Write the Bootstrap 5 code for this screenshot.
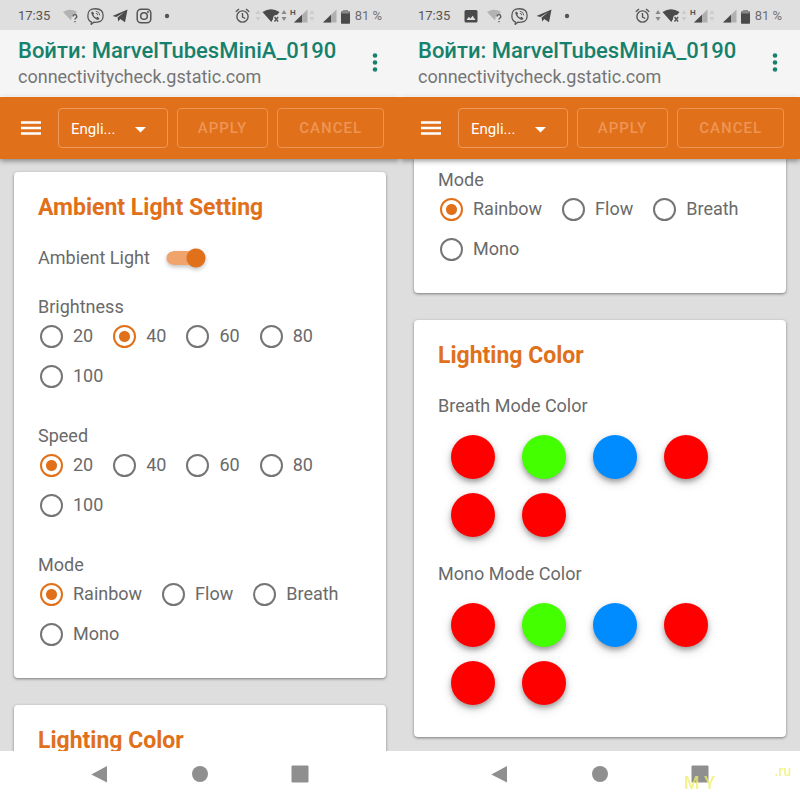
<!DOCTYPE html>
<html lang="en">
<head>
<meta charset="utf-8">
<meta name="viewport" content="width=device-width, initial-scale=1">
<title>Ambient Light Setting</title>
<link href="https://cdn.jsdelivr.net/npm/bootstrap@5.3.0/dist/css/bootstrap.min.css" rel="stylesheet">
<style>
  :root { --accent: #e0701a; --ink: #6a6a6a; }
  body { font-family: Roboto, "Liberation Sans", sans-serif; font-size: 18px; line-height: 20px; color: var(--ink); background: #dedede; }
  .status-bar { height: 30px; padding: 2px 18px 0; background: #dfdfdf; color: #555; font-size: 13px; }
  .status-bar svg { display: block; }
  .status-left { gap: 8px; }
  .clock { margin-right: 5px; }
  .charge { color: #707070; }
  .page-head { height: 67px; padding: 0 18px; background: #f5f5f5; border-bottom: 1px solid #fff; }
  .page-title { font-size: 22px; line-height: 28px; font-weight: 500; color: #16816c; }
  .page-host { font-size: 18px; line-height: 24px; color: #757575; }
  .more-btn { width: 14px; }
  .app-bar { height: 62px; padding: 0 16px 0 20px; gap: 9px; background: var(--accent); box-shadow: 0 2px 5px rgba(0,0,0,.4); z-index: 2; }
  .menu-btn { width: 22px; margin-right: 7px; }
  .bar-control { height: 40px; border: 1px solid #eb9a5c; border-radius: 4px; background-color: transparent; }
  .lang-box { width: 110px; }
  .lang-select { padding: 2px 12px 0; font-size: 15px; line-height: 20px; color: #fff; appearance: none; cursor: pointer; }
  .lang-select option { color: #333; }
  .lang-caret { right: 22px; top: 19px; pointer-events: none; }
  .bar-btn { font-size: 15px; line-height: 20px; font-weight: 500; letter-spacing: 1px; color: #f09c60; padding: 0; }
  .bar-btn:disabled { color: #ee9555; opacity: 1; }
  .apply { width: 92px; }
  .cancel { width: 107px; }
  .scroll-area { padding: 13px 14px 0; min-height: 0; }
  .scroll-area.scrolled { padding-top: 0; }
  .panel { padding: 22px 24px 32px; margin-bottom: 27px; background: #fff; border-radius: 4px; box-shadow: 0 1px 3px rgba(0,0,0,.45); }
  .panel.cut { padding-top: 11px; border-radius: 0 0 4px 4px; }
  .panel-title { font-size: 23px; line-height: 28px; font-weight: 700; color: var(--accent); margin: 0 0 26px; }
  .switch-row { gap: 16px; margin-bottom: 29px; }
  .switch { width: 40px; height: 20px; appearance: none; cursor: pointer; border-radius: 10px;
    background: radial-gradient(circle at 30px 10px, var(--accent) 9px, transparent 10px), linear-gradient(#f0a46c, #f0a46c) 7px 3px / 24px 14px no-repeat, radial-gradient(circle at 7px 10px, #f0a46c 6px, transparent 7px);
    filter: drop-shadow(0 2px 2px rgba(0,0,0,.25)); }
  fieldset + fieldset { margin-top: 38px; }
  .group-label { font-size: 18px; line-height: 20px; margin: 0; float: none; }
  .choices { padding: 7px 0 0 2px; gap: 16px 20px; }
  .choice { gap: 10px; height: 24px; cursor: pointer; }
  .choice .form-check-input { width: 23px; height: 23px; margin: 0; border: 2px solid #757575; background-color: transparent; box-shadow: none; }
  .choice .form-check-input:checked { border-color: var(--accent); background-image: radial-gradient(circle, var(--accent) 5px, transparent 6px); }
  .swatches { padding: 19px 0 0 13px; gap: 14px 27px; }
  .swatch { width: 44px; height: 44px; border: 0; border-radius: 50%; box-shadow: 0 3px 5px rgba(0,0,0,.3), 0 4px 12px rgba(0,0,0,.14); }
  .red { background: #f00; } .green { background: #4f0; } .blue { background: #008cff; }
  .swatch-group + .swatch-group { margin-top: 27px; }
  .nav-keys { height: 48px; padding-bottom: 2px; background: #fff; z-index: 2; }
  .nav-keys svg { display: block; }
  .stamp { color: #eef06a; font-weight: 500; pointer-events: none; z-index: 3; opacity: .75; }
  .stamp-my { right: 85px; bottom: 6px; font-size: 18px; }
  .stamp-ru { right: 9px; bottom: 18px; font-size: 14px; }
</style>
<script src="https://cdn.jsdelivr.net/npm/bootstrap@5.3.0/dist/js/bootstrap.bundle.min.js"></script>
</head>
<body>
<svg class="d-none" aria-hidden="true">
  <symbol id="i-wifi-q" viewBox="0 0 16 16"><path d="M0 4Q7-.5 14 4L12.500 6.500Q8.500 6.500 8.500 10L8 12.500Z" fill="#b3b3b3"/><path d="M10 8.600q0-1.900 1.900-1.900 1.900 0 1.900 1.700 0 1-.9 1.600-.9.600-.9 1.500M12 13v1.300" fill="none" stroke="#555" stroke-width="1.300"/></symbol>
  <symbol id="i-viber" viewBox="0 0 16 16"><path d="M8 .7C3 .7 .8 2.600.8 7.200c0 3.200 1 5 3.200 5.800v2.400l2.400-2C12.500 13.900 15.200 12 15.200 7.200 15.200 2.600 13 .7 8 .7Z" fill="none" stroke="#555" stroke-width="1.200"/><path d="M5.200 3.300l1.500 1.900-.8 1.200q.9 2 2.700 2.700l1.100-.9 2 1.500q-.4 1.700-1.700 1.600Q5 9.500 4 4.700q0-1 1.200-1.400Z" fill="#555"/><path d="M8.200 3q3.700.2 3.800 4M8.400 4.900q1.600.2 1.700 1.900" fill="none" stroke="#555" stroke-width=".8"/></symbol>
  <symbol id="i-telegram" viewBox="0 0 16 16"><path d="M.5 8 15.500 1.500 13 14.300 8.300 11 6.200 13.500 5.600 9.500 12.500 4 4.400 8.900Z" fill="#4a4a4a"/></symbol>
  <symbol id="i-insta" viewBox="0 0 16 16"><g fill="none" stroke="#555" stroke-width="1.500"><rect x="1.200" y="1.200" width="13.600" height="13.600" rx="3.800"/><circle cx="8" cy="8" r="3.300"/></g><circle cx="12" cy="4.100" r="1" fill="#555"/></symbol>
  <symbol id="i-photo" viewBox="0 0 16 16"><path fill="#4a4a4a" fill-rule="evenodd" d="M3 2h10q1.500 0 1.500 1.500v9.500q0 1.500-1.500 1.500H3q-1.500 0-1.500-1.500V3.500Q1.500 2 3 2ZM3.500 12h9L9.700 7.700 7.400 10.500 5.800 8.800Z"/></symbol>
  <symbol id="i-tri" viewBox="0 0 6 12"><path d="M3 0 5.500 4h-5ZM3 11 5.500 7h-5Z"/></symbol>
  <symbol id="i-signal" viewBox="0 0 14 14"><path d="M13.500.5v13H0Z" fill="#b0b0b0"/><path d="M8 5.700v7.800H0Z" fill="#4a4a4a"/></symbol>
  <symbol id="i-system" viewBox="0 0 116 20">
    <g fill="none" stroke="#555" stroke-width="1.400"><circle cx="7.500" cy="10.500" r="5.600"/><path d="M7.500 7v4l2.800 1.500M.8 5.800 4 3M14.200 5.800 11 3"/></g>
    <path d="M27.500 6Q36 .5 44.500 6L42 9Q38 8.500 38 13L36.300 16Z" fill="#4a4a4a"/><path d="M39.500 11l3.600 4.500M43.100 11l-3.600 4.500" stroke="#555" stroke-width="1.400"/>
    <text x="55" y="9" font-size="8" font-weight="700" fill="#555" font-family="Roboto, sans-serif">H</text>
    <use href="#i-signal" x="59" y="3" width="14" height="14"/><use href="#i-signal" x="88" y="3" width="14" height="14"/>
    <use href="#i-tri" x="74" y="4" width="6" height="12" fill="#ccc"/>
    <path d="M108.500 4h4v1.500h2q.5 0 .5.500v11q0 .8-.8.800h-7.400q-.8 0-.8-.8V6q0-.5.5-.5h2Z" fill="#4a4a4a"/><path d="M108.500 4h4v1.500h2v2h-8v-2h2Z" fill="#888"/>
  </symbol>
  <symbol id="i-more" viewBox="0 0 14 24"><g fill="#16816c"><circle cx="7" cy="4.500" r="2.300"/><circle cx="7" cy="11.500" r="2.300"/><circle cx="7" cy="18.500" r="2.300"/></g></symbol>
  <symbol id="i-menu" viewBox="0 0 22 16"><path d="M1 2.500h20M1 8h20M1 13.500h20" stroke="#fff" stroke-width="2.300"/></symbol>
  <symbol id="i-back" viewBox="0 0 18 18"><path d="M16 1v16.500L.3 9.500Z" fill="#8f8f8f"/></symbol>
  <symbol id="i-home" viewBox="0 0 18 18"><circle cx="9" cy="9" r="8" fill="#8f8f8f"/></symbol>
  <symbol id="i-recent" viewBox="0 0 18 18"><rect x=".5" y=".5" width="17" height="17" rx="1" fill="#8f8f8f"/></symbol>
</svg>

<div class="d-flex vh-100 overflow-hidden position-relative">
  <!-- Left screen: top of the settings page -->
  <section class="d-flex flex-column w-50 overflow-hidden">
    <div class="status-bar d-flex align-items-center justify-content-between flex-shrink-0">
      <div class="status-left d-flex align-items-center">
        <span class="clock">17:35</span>
        <svg width="16" height="16"><use href="#i-wifi-q"/></svg>
        <svg width="17" height="17"><use href="#i-viber"/></svg>
        <svg width="16" height="16"><use href="#i-telegram"/></svg>
        <svg width="16" height="16"><use href="#i-insta"/></svg>
        <svg width="16" height="16"><circle cx="7" cy="8" r="2.200" fill="#555"/></svg>
      </div>
      <div class="d-flex align-items-center gap-1">
        <svg width="116" height="20"><use href="#i-system"/><use href="#i-tri" x="20" y="4" width="6" height="12" fill="#ccc"/><use href="#i-tri" x="46" y="4" width="6" height="12" fill="#888"/></svg>
        <span class="charge">81 %</span>
      </div>
    </div>
    <header class="page-head d-flex align-items-center justify-content-between flex-shrink-0">
      <div class="text-nowrap">
        <div class="page-title">Войти: MarvelTubesMiniA_0190</div>
        <div class="page-host">connectivitycheck.gstatic.com</div>
      </div>
      <button type="button" class="more-btn btn p-0 border-0" aria-label="More options"><svg class="d-block" width="14" height="24"><use href="#i-more"/></svg></button>
    </header>
    <nav class="app-bar d-flex align-items-center flex-shrink-0 position-relative" aria-label="Settings">
      <button type="button" class="menu-btn btn p-0 border-0" aria-label="Menu"><svg class="d-block" width="22" height="16"><use href="#i-menu"/></svg></button>
      <div class="lang-box position-relative">
        <select class="lang-select bar-control w-100" aria-label="Language"><option>Engli...</option></select>
        <svg class="lang-caret position-absolute" width="11" height="6"><path d="M0 0h11L5.500 5.500Z" fill="#fff"/></svg>
      </div>
      <button type="button" class="bar-control bar-btn btn apply" disabled>APPLY</button>
      <button type="button" class="bar-control bar-btn btn cancel" disabled>CANCEL</button>
    </nav>
    <main class="scroll-area flex-grow-1 overflow-hidden">
      <div class="panel">
        <h2 class="panel-title">Ambient Light Setting</h2>
        <div class="switch-row d-flex align-items-center">
          <label for="ambient">Ambient Light</label>
          <input class="switch" type="checkbox" role="switch" id="ambient" checked>
        </div>
        <fieldset>
          <legend class="group-label">Brightness</legend>
          <div class="choices d-flex flex-wrap">
            <label class="choice d-flex align-items-center"><input class="form-check-input" type="radio" name="bright">20</label>
            <label class="choice d-flex align-items-center"><input class="form-check-input" type="radio" name="bright" checked>40</label>
            <label class="choice d-flex align-items-center"><input class="form-check-input" type="radio" name="bright">60</label>
            <label class="choice d-flex align-items-center"><input class="form-check-input" type="radio" name="bright">80</label>
            <label class="choice d-flex align-items-center"><input class="form-check-input" type="radio" name="bright">100</label>
          </div>
        </fieldset>
        <fieldset>
          <legend class="group-label">Speed</legend>
          <div class="choices d-flex flex-wrap">
            <label class="choice d-flex align-items-center"><input class="form-check-input" type="radio" name="speed" checked>20</label>
            <label class="choice d-flex align-items-center"><input class="form-check-input" type="radio" name="speed">40</label>
            <label class="choice d-flex align-items-center"><input class="form-check-input" type="radio" name="speed">60</label>
            <label class="choice d-flex align-items-center"><input class="form-check-input" type="radio" name="speed">80</label>
            <label class="choice d-flex align-items-center"><input class="form-check-input" type="radio" name="speed">100</label>
          </div>
        </fieldset>
        <fieldset>
          <legend class="group-label">Mode</legend>
          <div class="choices d-flex flex-wrap">
            <label class="choice d-flex align-items-center"><input class="form-check-input" type="radio" name="mode" checked>Rainbow</label>
            <label class="choice d-flex align-items-center"><input class="form-check-input" type="radio" name="mode">Flow</label>
            <label class="choice d-flex align-items-center"><input class="form-check-input" type="radio" name="mode">Breath</label>
            <label class="choice d-flex align-items-center"><input class="form-check-input" type="radio" name="mode">Mono</label>
          </div>
        </fieldset>
      </div>
      <div class="panel">
        <h2 class="panel-title">Lighting Color</h2>
      </div>
    </main>
    <footer class="nav-keys d-flex align-items-center justify-content-center flex-shrink-0">
      <div class="w-25 d-flex justify-content-center"><button type="button" class="btn p-0 border-0" aria-label="Back"><svg width="18" height="18"><use href="#i-back"/></svg></button></div>
      <div class="w-25 d-flex justify-content-center"><button type="button" class="btn p-0 border-0" aria-label="Home"><svg width="18" height="18"><use href="#i-home"/></svg></button></div>
      <div class="w-25 d-flex justify-content-center"><button type="button" class="btn p-0 border-0" aria-label="Recent apps"><svg width="18" height="18"><use href="#i-recent"/></svg></button></div>
    </footer>
  </section>

  <!-- Right screen: the same page scrolled to the colours -->
  <section class="d-flex flex-column w-50 overflow-hidden">
    <div class="status-bar d-flex align-items-center justify-content-between flex-shrink-0">
      <div class="status-left d-flex align-items-center">
        <span class="clock">17:35</span>
        <svg width="16" height="16"><use href="#i-photo"/></svg>
        <svg width="16" height="16"><use href="#i-wifi-q"/></svg>
        <svg width="17" height="17"><use href="#i-viber"/></svg>
        <svg width="16" height="16"><use href="#i-telegram"/></svg>
        <svg width="16" height="16"><circle cx="7" cy="8" r="2.200" fill="#555"/></svg>
      </div>
      <div class="d-flex align-items-center gap-1">
        <svg width="116" height="20"><use href="#i-system"/><use href="#i-tri" x="20" y="4" width="6" height="12" fill="#888"/><use href="#i-tri" x="46" y="4" width="6" height="12" fill="#ccc"/></svg>
        <span class="charge">81 %</span>
      </div>
    </div>
    <header class="page-head d-flex align-items-center justify-content-between flex-shrink-0">
      <div class="text-nowrap">
        <div class="page-title">Войти: MarvelTubesMiniA_0190</div>
        <div class="page-host">connectivitycheck.gstatic.com</div>
      </div>
      <button type="button" class="more-btn btn p-0 border-0" aria-label="More options"><svg class="d-block" width="14" height="24"><use href="#i-more"/></svg></button>
    </header>
    <nav class="app-bar d-flex align-items-center flex-shrink-0 position-relative" aria-label="Settings, scrolled">
      <button type="button" class="menu-btn btn p-0 border-0" aria-label="Menu"><svg class="d-block" width="22" height="16"><use href="#i-menu"/></svg></button>
      <div class="lang-box position-relative">
        <select class="lang-select bar-control w-100" aria-label="Language"><option>Engli...</option></select>
        <svg class="lang-caret position-absolute" width="11" height="6"><path d="M0 0h11L5.500 5.500Z" fill="#fff"/></svg>
      </div>
      <button type="button" class="bar-control bar-btn btn apply" disabled>APPLY</button>
      <button type="button" class="bar-control bar-btn btn cancel" disabled>CANCEL</button>
    </nav>
    <main class="scroll-area scrolled flex-grow-1 overflow-hidden">
      <div class="panel cut">
        <fieldset>
          <legend class="group-label">Mode</legend>
          <div class="choices d-flex flex-wrap">
            <label class="choice d-flex align-items-center"><input class="form-check-input" type="radio" name="mode2" checked>Rainbow</label>
            <label class="choice d-flex align-items-center"><input class="form-check-input" type="radio" name="mode2">Flow</label>
            <label class="choice d-flex align-items-center"><input class="form-check-input" type="radio" name="mode2">Breath</label>
            <label class="choice d-flex align-items-center"><input class="form-check-input" type="radio" name="mode2">Mono</label>
          </div>
        </fieldset>
      </div>
      <div class="panel">
        <h2 class="panel-title">Lighting Color</h2>
        <div class="swatch-group">
          <h3 class="group-label fw-normal">Breath Mode Color</h3>
          <div class="swatches d-flex flex-wrap">
            <button type="button" class="swatch red" aria-label="Breath color 1"></button>
            <button type="button" class="swatch green" aria-label="Breath color 2"></button>
            <button type="button" class="swatch blue" aria-label="Breath color 3"></button>
            <button type="button" class="swatch red" aria-label="Breath color 4"></button>
            <button type="button" class="swatch red" aria-label="Breath color 5"></button>
            <button type="button" class="swatch red" aria-label="Breath color 6"></button>
          </div>
        </div>
        <div class="swatch-group">
          <h3 class="group-label fw-normal">Mono Mode Color</h3>
          <div class="swatches d-flex flex-wrap">
            <button type="button" class="swatch red" aria-label="Mono color 1"></button>
            <button type="button" class="swatch green" aria-label="Mono color 2"></button>
            <button type="button" class="swatch blue" aria-label="Mono color 3"></button>
            <button type="button" class="swatch red" aria-label="Mono color 4"></button>
            <button type="button" class="swatch red" aria-label="Mono color 5"></button>
            <button type="button" class="swatch red" aria-label="Mono color 6"></button>
          </div>
        </div>
      </div>
    </main>
    <footer class="nav-keys d-flex align-items-center justify-content-center flex-shrink-0">
      <div class="w-25 d-flex justify-content-center"><button type="button" class="btn p-0 border-0" aria-label="Back"><svg width="18" height="18"><use href="#i-back"/></svg></button></div>
      <div class="w-25 d-flex justify-content-center"><button type="button" class="btn p-0 border-0" aria-label="Home"><svg width="18" height="18"><use href="#i-home"/></svg></button></div>
      <div class="w-25 d-flex justify-content-center"><button type="button" class="btn p-0 border-0" aria-label="Recent apps"><svg width="18" height="18"><use href="#i-recent"/></svg></button></div>
    </footer>
  </section>
  <span class="stamp stamp-my position-absolute">M Y</span>
  <span class="stamp stamp-ru position-absolute">.ru</span>
</div>
</body>
</html>
